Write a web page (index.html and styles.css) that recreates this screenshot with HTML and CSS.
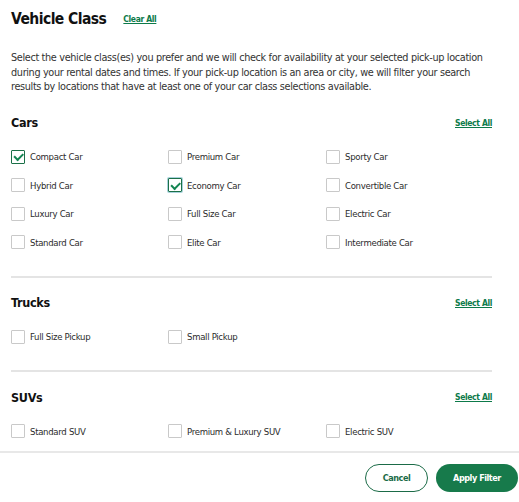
FILE: index.html
```html
<!DOCTYPE html>
<html lang="en">
<head>
  <meta charset="UTF-8" />
  <meta name="viewport" content="width=device-width, initial-scale=1.0"/>
  <title>Vehicle Class</title>
  <link rel="stylesheet" href="styles.css">
</head>
<body>

  <div class="filter">
    <div class="filter-body">
      <div class="filter-head">
        <h2>Vehicle Class</h2>
        <a href="#" class="link">Clear All</a>
      </div>
      <p class="intro">Select the vehicle class(es) you prefer and we will check for availability at your selected pick-up location during your rental dates and times. If your pick-up location is an area or city, we will filter your search results by locations that have at least one of your car class selections available.</p>

      <section class="group">
        <div class="group-head">
          <h3>Cars</h3>
          <a href="#" class="link">Select All</a>
        </div>
        <div class="options">
          <label class="option"><input type="checkbox" checked> Compact Car</label>
          <label class="option"><input type="checkbox"> Premium Car</label>
          <label class="option"><input type="checkbox"> Sporty Car</label>
          <label class="option"><input type="checkbox"> Hybrid Car</label>
          <label class="option"><input type="checkbox" class="focused" checked> Economy Car</label>
          <label class="option"><input type="checkbox"> Convertible Car</label>
          <label class="option"><input type="checkbox"> Luxury Car</label>
          <label class="option"><input type="checkbox"> Full Size Car</label>
          <label class="option"><input type="checkbox"> Electric Car</label>
          <label class="option"><input type="checkbox"> Standard Car</label>
          <label class="option"><input type="checkbox"> Elite Car</label>
          <label class="option"><input type="checkbox"> Intermediate Car</label>
        </div>
      </section>

      <section class="group">
        <div class="group-head">
          <h3>Trucks</h3>
          <a href="#" class="link">Select All</a>
        </div>
        <div class="options">
          <label class="option"><input type="checkbox"> Full Size Pickup</label>
          <label class="option"><input type="checkbox"> Small Pickup</label>
        </div>
      </section>

      <section class="group">
        <div class="group-head">
          <h3>SUVs</h3>
          <a href="#" class="link">Select All</a>
        </div>
        <div class="options">
          <label class="option"><input type="checkbox"> Standard SUV</label>
          <label class="option"><input type="checkbox"> Premium &amp; Luxury SUV</label>
          <label class="option"><input type="checkbox"> Electric SUV</label>
        </div>
      </section>
    </div>

    <div class="filter-foot">
      <button class="btn btn-outline">Cancel</button>
      <button class="btn btn-solid">Apply Filter</button>
    </div>
  </div>

</body>
</html>
```

FILE: styles.css
```css
/* ─── Reset & Body ───────────────────────────────────────────────────────── */
* { box-sizing: border-box; margin: 0; padding: 0; }
body {
  background: #fff;
  color: #2b2b2b;
  font-family: "DejaVu Sans Condensed", "DejaVu Sans", sans-serif;
}

/* ─── Panel ──────────────────────────────────────────────────────────────── */
.filter-body { padding: 8px 27px 0 11px; }
.filter-head {
  display: flex;
  align-items: center;
  gap: 17px;
  height: 22px;
}
.filter-head h2 {
  font-size: 15.5px;
  font-weight: 700;
  letter-spacing: -0.55px;
  color: #111;
}
.link {
  color: #0d7a4a;
  font-size: 8.5px;
  font-weight: 700;
  letter-spacing: -0.35px;
  text-decoration: underline;
}
.intro {
  margin: 21px -8px 3px 0;
  font-size: 10.8px;
  line-height: 14.5px;
  letter-spacing: -0.35px;
  color: #333;
}

/* ─── Class Groups ───────────────────────────────────────────────────────── */
.group {
  padding: 16px 0 19px;
  border-bottom: 2px solid #e4e4e4;
}
.group:last-child { border-bottom: 0; padding-bottom: 5px; }
.group-head {
  display: flex;
  align-items: center;
  justify-content: space-between;
  height: 18px;
  margin-bottom: 11px;
}
.group-head h3 {
  font-size: 12.5px;
  font-weight: 700;
  letter-spacing: -0.3px;
  color: #111;
}
.options {
  display: grid;
  grid-template-columns: 157px 158px 1fr;
  grid-auto-rows: 28.5px;
}
.option {
  display: flex;
  align-items: center;
  gap: 5px;
  font-size: 9.5px;
  letter-spacing: -0.3px;
  color: #2b2b2b;
  cursor: pointer;
}
.option input {
  appearance: none;
  flex: none;
  width: 14px;
  height: 14px;
  border: 1px solid #c9c9c9;
  border-radius: 1px;
  background: #fff;
  display: grid;
  place-items: center;
}
.option input:checked { border: 1.5px solid #1b7048; }
.option input:checked::after {
  content: "";
  width: 7px;
  height: 3.5px;
  margin-top: -2px;
  border-left: 2.2px solid #138552;
  border-bottom: 2.2px solid #138552;
  transform: rotate(-45deg);
}
.option input.focused { box-shadow: 0 0 0 1px #a9d3dc; }

/* ─── Footer ─────────────────────────────────────────────────────────────── */
.filter-foot {
  display: flex;
  justify-content: flex-end;
  gap: 8px;
  padding: 11px 1px 0 0;
  border-top: 2px solid #e8e8e8;
}
.btn {
  height: 28px;
  border-radius: 14px;
  font-family: inherit;
  font-size: 9px;
  font-weight: 700;
  letter-spacing: -0.45px;
  cursor: pointer;
}
.btn-outline {
  width: 63px;
  background: #fff;
  color: #1b6b47;
  border: 1.5px solid #1b6b47;
}
.btn-solid {
  width: 82px;
  background: #177a4b;
  color: #fff;
  border: 0;
}
```
